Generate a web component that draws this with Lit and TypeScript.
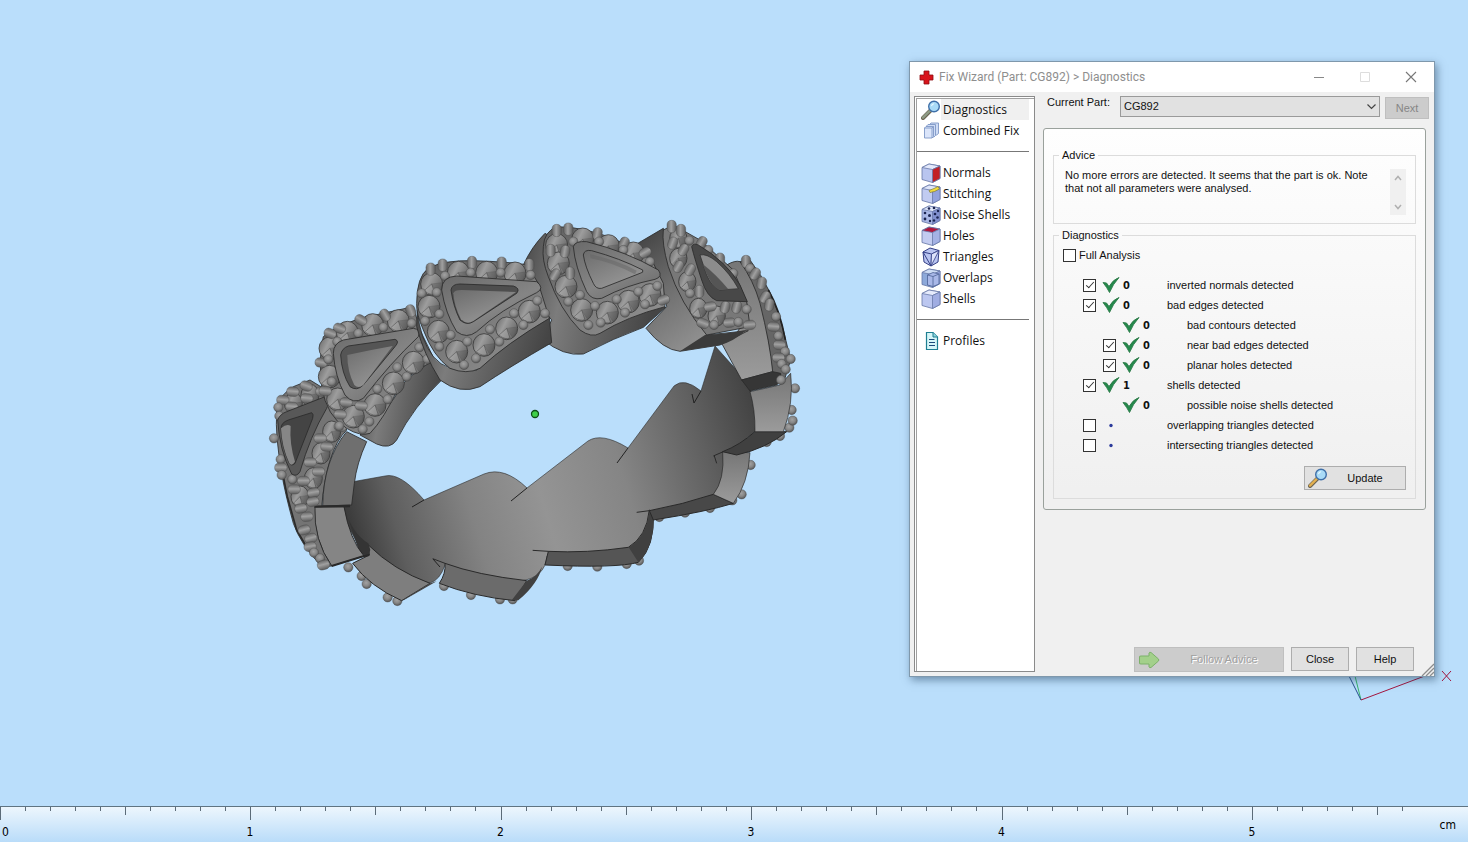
import { LitElement, html, svg, css, nothing } from "lit";
import { customElement } from "lit/decorators.js";

type Bead = [number, number, number?];

const cube = (top: string, left: string, right: string, extra: unknown = nothing) => svg`
  <path d="M1 4.500 L8 1 L19 3 V15.500 L11.500 19.500 L1 16.500 Z" fill=${left} stroke="#6676a4" stroke-width=".8"/>
  <path d="M1 4.500 L8 1 L19 3 L11.500 6.500 Z" fill=${top} stroke="#6a7aa8" stroke-width=".8"/>
  <path d="M11.500 6.500 L19 3 V15.500 L11.500 19.500 Z" fill=${right} stroke="#6a7aa8" stroke-width=".8"/>
  ${extra}`;

const lens = (handle: string) => svg`
  <path d="M2 18 L9.5 10.5" stroke="#6b6350" stroke-width="4" stroke-linecap="round"/>
  <path d="M2 17.6 L9 10.7" stroke=${handle} stroke-width="2.4" stroke-linecap="round"/>
  <circle cx="13" cy="6.5" r="5.3" fill="#a9dbf7" stroke="#3f6fa8" stroke-width="1.4"/>
  <path d="M9.8 6.5 Q10 3.4 13.4 3.2 Q12 6 9.8 6.5Z" fill="#e9f8ff"/>`;

const icons: Record<string, unknown> = {
  diagnostics: lens("#8f9c86"),
  combined: svg`
    <g stroke="#7f97c6" stroke-width=".9" fill="#cfdcf5">
      <path d="M8.500 3.500 L10 2 H17.500 V12.500 L15.500 14 H8.500Z"/>
      <path d="M5.500 5 L7 3.500 H14.500 V14.500 L13 16 H5.500Z"/>
      <path d="M3.500 7 L5 5.500 H12.500 V15.500 L11 17 H3.500Z" fill="#dbe5fa"/>
      <path d="M3.500 7 H11 V17 M11 7 L12.500 5.500" fill="none"/>
    </g>`,
  normals: cube("#e4e9fb", "#b9c5ef", "#c21f25"),
  stitching: cube("#dfe6fa", "#c1cbf1", "#93a2dd", svg`<path d="M8 6.500 L13 4.500 L17 2.500 L18.500 5 L13.500 7.500 L9 8.500Z" fill="#f2dc3c" stroke="#7d7a3a" stroke-width=".7"/>`),
  noise: cube("#dfe6fa", "#a9b7e6", "#8190cf", svg`
    <g fill="#1b2450"><circle cx="4" cy="8" r="1.300"/><circle cx="8" cy="3.500" r="1.300"/><circle cx="13" cy="3" r="1.300"/>
    <circle cx="8.500" cy="10.500" r="1.500"/><circle cx="4" cy="14" r="1.400"/><circle cx="9" cy="16" r="1.200"/>
    <circle cx="14" cy="9" r="1.300"/><circle cx="17" cy="6" r="1.200"/><circle cx="16.500" cy="12.500" r="1.300"/><circle cx="13" cy="15.500" r="1.200"/></g>`),
  holes: cube("#b0173c", "#c3ccf1", "#a5b2e5"),
  triangles: svg`
    <path d="M2 5 L9 1 L18 3.500 L17 15 L10 19 L3 15Z" fill="#b9c4f0" stroke="#343f86"/>
    <path d="M2 5 L10.500 7 L18 3.500 M10.500 7 L10 19 M2 5 L10 19" fill="none" stroke="#343f86"/>
    <path d="M10.500 7 L18 3.500 L10 19Z" fill="#dde3fa" stroke="#343f86" stroke-width=".8"/>`,
  overlaps: cube("#cddcf4", "#8da9da", "#9cabe3", svg`<path d="M6.500 7 L12 4.500 L18 6 V16 L12 18.500 L6.500 17Z" fill="#a9b8e8" stroke="#4c6296" stroke-width=".8"/><path d="M6.500 7 L12 8.500 L18 6 M12 8.500 V18.500" fill="none" stroke="#4c6296" stroke-width=".8"/>`),
  shells: cube("#e6ebfc", "#bcc7f0", "#a0ade2"),
  profiles: svg`
    <path d="M5.500 1.500 H12 L16.500 6 V18.500 H5.500Z" fill="#d6f6f8" stroke="#1e7f92" stroke-width="1.200"/>
    <path d="M12 1.500 V6 H16.500" fill="#8fd5de" stroke="#1e7f92"/>
    <path d="M8 8.500 H13.500 M8 11.500 H14 M8 14.500 H14" stroke="#1b4a7a" stroke-width="1.200"/>`,
};

const menu = [
  [["Diagnostics", "diagnostics"], ["Combined Fix", "combined"]],
  [["Normals", "normals"], ["Stitching", "stitching"], ["Noise Shells", "noise"], ["Holes", "holes"], ["Triangles", "triangles"], ["Overlaps", "overlaps"], ["Shells", "shells"]],
  [["Profiles", "profiles"]],
];

interface Check { label: string; count?: number; sub?: boolean; box?: boolean; on?: boolean }
const checks: Check[] = [
  { label: "inverted normals detected", count: 0, box: true, on: true },
  { label: "bad edges detected", count: 0, box: true, on: true },
  { label: "bad contours detected", count: 0, sub: true },
  { label: "near bad edges detected", count: 0, sub: true, box: true, on: true },
  { label: "planar holes detected", count: 0, sub: true, box: true, on: true },
  { label: "shells detected", count: 1, box: true, on: true },
  { label: "possible noise shells detected", count: 0, sub: true },
  { label: "overlapping triangles detected", box: true },
  { label: "intersecting triangles detected", box: true },
];

@customElement("ring-model")
class RingModel extends LitElement {
  static styles = css`
    :host { display: block; }
    svg { display: block; width: 100%; }
  `;

  beads(list: Bead[]) {
    return list.map(([x, y, a]) => a === undefined
      ? svg`<circle cx=${x} cy=${y} r="14" fill="url(#bead)" stroke="#484848" stroke-width="1.2"/>`
      : svg`<rect x="-14" y="-19" width="28" height="37" rx="13" fill="url(#peg)" stroke="#484848" stroke-width="1.2" transform="translate(${x} ${y}) rotate(${a})"/>`);
  }

  gems(list: [number, number][], rx = 33, ry = 34) {
    return list.map(([x, y]) => svg`
      <ellipse cx=${x} cy=${y} rx=${rx} ry=${ry} fill="url(#gem)" stroke="#303030" stroke-width="2.2"/>
      <path d="M${x} ${y} L${x - rx * 0.7} ${y + ry * 0.6} Q${x - rx * 0.1} ${y + ry * 1.05} ${x + rx * 0.3} ${y + ry * 0.85}Z" fill="#b0b0b0" opacity=".4"/>
      <path d="M${x} ${y} L${x + rx * 0.9} ${y - ry * 0.1} Q${x + rx * 0.9} ${y + ry * 0.5} ${x + rx * 0.5} ${y + ry * 0.75}Z" fill="#444" opacity=".25"/>`);
  }

  render() {
    return html`
      <svg viewBox="260 210 550 410" role="img" aria-label="Ring model">
        <defs>
          <radialGradient id="bead" cx=".45" cy=".38" r=".62"><stop offset="0" stop-color="#a2a2a2"/><stop offset=".55" stop-color="#878787"/><stop offset="1" stop-color="#555"/></radialGradient>
          <linearGradient id="peg"><stop offset="0" stop-color="#666"/><stop offset=".45" stop-color="#a0a0a0"/><stop offset="1" stop-color="#5c5c5c"/></linearGradient>
          <linearGradient id="gem" x2="1" y2=".5"><stop offset="0" stop-color="#646464"/><stop offset=".45" stop-color="#9d9d9d"/><stop offset="1" stop-color="#6a6a6a"/></linearGradient>
          <linearGradient id="inner" gradientUnits="userSpaceOnUse" x1="350" y1="520" x2="755" y2="400">
            <stop offset="0" stop-color="#3c3c3c"/><stop offset=".1" stop-color="#5e5e5e"/><stop offset=".28" stop-color="#838383"/><stop offset=".45" stop-color="#949494"/><stop offset=".65" stop-color="#858585"/><stop offset=".85" stop-color="#606060"/><stop offset="1" stop-color="#424242"/>
          </linearGradient>
          <linearGradient id="face" x2="1" y2="1"><stop offset="0" stop-color="#606060"/><stop offset="1" stop-color="#949494"/></linearGradient>
          <linearGradient id="wall" x2="1" y2=".2"><stop offset="0" stop-color="#474747"/><stop offset=".35" stop-color="#7c7c7c"/><stop offset=".6" stop-color="#666"/><stop offset="1" stop-color="#454545"/></linearGradient>
          <linearGradient id="wallRight" x2=".7" y2="1"><stop offset="0" stop-color="#3e3e3e"/><stop offset=".45" stop-color="#6d6d6d"/><stop offset="1" stop-color="#999"/></linearGradient>
          <linearGradient id="frame" x2=".8" y2="1"><stop offset="0" stop-color="#6a6a6a"/><stop offset=".6" stop-color="#858585"/><stop offset="1" stop-color="#6c6c6c"/></linearGradient>
          <linearGradient id="pit" x2=".7" y2="1"><stop offset="0" stop-color="#6c6c6c"/><stop offset="1" stop-color="#989898"/></linearGradient>
          <linearGradient id="block" x2="0" y2="1"><stop offset="0" stop-color="#767676"/><stop offset="1" stop-color="#9b9b9b"/></linearGradient>
        </defs>

        <g transform="translate(260 400) scale(.33333)">
          ${this.beads([[265, 502], [305, 528], [320, 552], [383, 592], [412, 603], [552, 558], [633, 585], [720, 598], [758, 598]])}
        </g>
        <g transform="translate(520 380) scale(.33333)">
          ${this.beads([[143, 558], [232, 560], [320, 552], [357, 542], [418, 411], [495, 398], [570, 384], [637, 361], [665, 343], [692, 255], [740, 186], [780, 168], [808, 143], [818, 122], [815, 90], [825, 25]])}
        </g>

        <path d="M340 484 L385 476 Q400 472 424 500 L484 474 Q504 466 527 488 L588 441 Q602 432 628 448 L674 386 Q684 377 701 391 L715 346 L750 385 L757 430 L725 456 L724 475 Q722 488 713 497 L650 513 Q648 534 630 552 L547 556 Q545 578 520 581 Q470 575 445 565 Q440 580 430 583 Q380 572 364 556 L345 520Z" fill="url(#inner)" stroke="#2a2a2a" stroke-width=".6"/>
        <path d="M412 507 L424 500 M511 501 L527 488 M617 463 L628 448 M694 403 L701 391 M694 403 L692 394 M433 559 L440 567" stroke="#222" stroke-width="1" fill="none"/>

        <g transform="translate(260 400) scale(.33333)" stroke="#292929" stroke-width="3">
          <path d="M325 435 Q400 510 510 550 L425 602 Q330 560 278 490 L328 465Z" fill="#7e7e7e"/>
          <path d="M510 550 L530 544 L432 600 L425 602Z" fill="#444" stroke="none"/>
          <path d="M555 490 Q650 525 800 542 L765 602 Q640 590 538 550 Q558 520 555 490Z" fill="#6b6b6b"/>
          <path d="M518 476 L555 490" fill="none"/>
          <path d="M800 542 Q832 530 846 500 Q835 550 775 601 L755 601Z" fill="#414141" stroke="none"/>
          <path d="M252 320 Q275 400 325 430 L331 450 L325 465 L300 462 Z" fill="#343434" stroke="none"/>
          <path d="M163 320 L252 320 Q270 420 312 468 L215 498 Q160 420 163 320Z" fill="#858585"/>
          <path d="M215 498 L312 468 L328 465" fill="none" stroke-width="6"/>
        </g>
        <g transform="translate(520 380) scale(.33333)" stroke="#292929" stroke-width="3">
          <path d="M85 514 Q200 520 325 502 Q380 470 388 390 L400 398 Q405 500 355 547 Q290 565 75 555Z" fill="#555"/>
          <path d="M38 511 L85 514" fill="none"/>
          <path d="M326 502 Q380 470 388 392 L400 398 Q405 500 355 547Z" fill="#404040" stroke="none"/>
          <path d="M388 392 Q490 373 580 343 L640 370 Q560 395 400 420Z" fill="#484848"/>
          <path d="M350 397 L388 392" fill="none"/>
          <path d="M580 343 Q615 300 608 215 L690 218 Q685 310 640 370Z" fill="url(#block)" stroke-width="2"/>
          <path d="M608 215 Q660 195 705 155 L800 155 Q740 205 650 225Z" fill="#404040"/>
          <path d="M580 228 L610 215 M583 228 L590 250" fill="none"/>
          <path d="M690 35 L780 15 L812 -20 Q822 70 790 155 L705 155 Q706 90 690 35Z" fill="url(#block)" stroke-width="2"/>
        </g>

        <g transform="translate(520 210) scale(.33333)" stroke="#2a2a2a" stroke-width="2.5">
          <path d="M660 155 L690 150 Q760 240 790 360 L812 450 L790 520 L758 490 Q740 300 660 155Z" fill="#666"/>
          <path d="M745 240 Q780 300 796 390" stroke="#222" stroke-width="5" fill="none"/>
          <path d="M620 165 Q645 150 660 155 Q700 210 720 280 Q750 400 758 485 L665 510 L605 400 L650 370 L690 300Z" fill="url(#block)"/>
          <path d="M665 510 L758 485 L782 490 Q785 515 770 525 L690 543Z" fill="#363636"/>
          ${this.beads([[678, 155, 0], [690, 175], [705, 192, 30], [725, 220, 10], [735, 262, 30], [748, 285, 10], [768, 320], [760, 350, 95], [775, 378], [778, 405, 95], [795, 425], [775, 443, 92], [785, 462], [812, 447], [797, 478], [783, 510]])}

          <path d="M430 55 L345 105 Q400 140 425 220 L440 290 L378 355 Q430 420 480 424 L600 405 L685 362 L560 375Z" fill="url(#wallRight)"/>
          <path d="M555 375 Q620 372 680 360 Q640 395 600 405 L480 424Z" fill="#3b3b3b" stroke="none"/>
          <path d="M430 60 L460 45 L540 90 L640 180 L680 275 L690 350 L560 375 Q480 280 445 170 Q425 100 430 60Z" fill="#787878"/>
          ${this.gems([[475, 85], [475, 145], [502, 215], [535, 295], [590, 318]], 26, 30)}
          ${this.beads([[565, 120], [455, 50, 0], [483, 62, 0], [458, 100, 20], [508, 92], [545, 98, 30], [490, 120, 30], [475, 170, 30], [510, 180, 30], [600, 148, 0], [640, 190], [510, 250], [538, 245, 0], [570, 290, 80], [615, 292, 15], [650, 292, 15], [680, 298], [548, 340, 110], [582, 345], [628, 338, 85], [655, 336], [688, 345, 85]])}
          <path d="M515 110 Q520 98 535 105 Q620 155 660 225 L682 275 L590 272 Q560 260 545 210 Q525 150 515 110Z" fill="#484848"/>
          <path d="M540 135 Q560 130 590 155 Q630 190 655 236 L600 240 Q575 230 560 195Z" fill="#8c8c8c" stroke-width="2"/>
          <path d="M548 162 Q590 195 625 238 L598 240 Q572 230 548 162Z" fill="#555" stroke="none"/>

          <path d="M75 70 Q35 110 10 165 L60 230 Q55 290 95 330 L68 388 Q130 440 190 432 Q280 385 370 352 L437 292Z" fill="url(#wall)"/>
          <path d="M70 110 Q72 65 110 50 Q200 50 300 95 L395 150 L430 220 L435 290 Q320 320 240 370 Q215 385 180 360 Q120 300 85 200 Q65 150 70 110Z" fill="url(#face)"/>
          ${this.gems([[110, 105], [115, 160], [138, 230], [185, 300], [262, 308], [325, 275], [390, 255], [188, 88], [265, 108], [340, 130]])}
          ${this.beads([[110, 62, 0], [145, 58, 0], [232, 72, 10], [312, 100, 25], [375, 128, 60], [92, 122, 0], [135, 125, 10], [160, 95], [237, 95], [310, 120], [390, 155], [105, 195, 30], [150, 190, 0], [145, 275], [180, 255], [205, 345], [242, 338], [225, 288], [290, 268], [315, 308], [355, 245], [375, 283], [412, 228], [430, 270, 70]])}
          <path d="M160 110 Q165 92 200 95 Q320 125 415 180 Q430 200 405 208 Q320 225 245 265 Q215 272 200 245 Q165 170 160 110Z" fill="url(#frame)"/>
          <path d="M190 135 Q192 118 215 122 Q300 145 368 180 Q372 188 360 190 L245 235 Q228 238 220 220 Q195 170 190 135Z" fill="url(#pit)"/>
          <path d="M210 133 Q290 150 350 182 L345 193 Q280 158 212 145Z" fill="#666" stroke="none" opacity=".5"/>
        </g>

        <g transform="translate(260 400) scale(.33333)" stroke="#2a2a2a" stroke-width="2.5">
          <path d="M50 20 Q60 -15 100 -40 L150 -60 L215 -20 L260 90 Q200 150 185 320 L165 320 Q160 420 215 498 L185 500 Q120 430 100 370 Q75 280 65 220 Q45 100 50 40Z" fill="#747474"/>
          <path d="M68 220 L82 290 L110 390 L145 450" fill="none" stroke="#2a2a2a" stroke-width="5"/>
          <path d="M260 95 L320 125 Q290 190 283 250 L275 315 L188 318 Q190 180 260 95Z" fill="#6f6f6f"/>
          <path d="M163 320 L270 318" stroke-width="7" fill="none"/>
          ${this.gems([[215, 95], [183, 160], [160, 235], [120, 290], [100, 10], [150, -15]], 27, 32)}
          ${this.beads([[98, -25, 95], [138, -42, 110], [185, -25, 95], [140, -5, 95], [68, 0, 95], [95, 20, 95], [55, 22], [58, 48], [42, 115], [62, 178], [62, 203, 90], [65, 225], [180, 115, 90], [200, 140, 95], [150, 187, 90], [175, 215, 90], [130, 243, 90], [97, 238], [102, 268, 90], [160, 278, 80], [158, 305, 80], [122, 325, 80], [140, 350, 85], [132, 390, 75], [152, 415, 75], [150, 440, 80], [162, 458], [180, 475], [190, 495, 75], [240, 80, 100]])}
          <path d="M53 60 Q60 42 80 35 L190 -8 Q215 -2 200 25 Q150 110 120 215 Q110 232 95 222 Q58 150 53 60Z" fill="#585858"/>
          <path d="M63 85 Q63 68 85 60 L155 38 Q162 42 158 55 L105 190 Q95 200 88 190 Q65 140 63 85Z" fill="#444"/>
          <path d="M63 85 Q80 70 92 78 Q88 130 105 185 Q95 200 88 190 Q65 140 63 85Z" fill="#868686" stroke="none"/>
        </g>

        <g transform="translate(260 240) scale(.33333)" stroke="#2a2a2a" stroke-width="2.5">
          <path d="M300 585 Q380 520 430 430 Q480 380 525 360 L550 415 Q460 500 410 600 Q390 630 350 612Z" fill="url(#wall)"/>
          <path d="M190 290 Q215 265 300 235 L460 200 L480 270 L525 362 Q460 390 420 435 Q370 540 330 580 Q300 590 260 565 Q200 530 185 440 Q175 350 190 290Z" fill="url(#face)"/>
          ${this.gems([[210, 325], [208, 410], [233, 478], [280, 530], [345, 495], [400, 430], [460, 368], [262, 278], [338, 255], [415, 243]])}
          ${this.beads([[452, 212, 160], [455, 250], [375, 225, 150], [370, 262], [302, 240, 120], [295, 280], [238, 265, 110], [210, 280, 110], [232, 305], [183, 368, 100], [205, 358], [195, 453, 95], [215, 425], [258, 487, 95], [303, 497, 95], [240, 523, 95], [328, 545], [308, 568], [238, 558], [352, 447], [383, 478], [412, 382], [440, 410], [478, 322], [502, 357]])}
          <path d="M220 340 Q220 310 250 300 L460 265 Q485 268 475 290 Q390 370 310 475 Q280 495 255 465 Q225 410 220 340Z" fill="url(#frame)"/>
          <path d="M242 345 Q245 325 265 318 L405 298 Q420 303 405 320 L310 435 Q290 455 270 440 Q245 400 242 345Z" fill="#555"/>
          <path d="M262 345 Q330 330 398 318 L310 435 Q295 447 283 435 Q262 395 262 345Z" fill="url(#pit)" stroke="none"/>

          <path d="M472 210 Q480 300 520 350 Q560 400 650 390 Q740 310 868 232 L875 308 Q750 380 660 440 Q600 465 540 420 Q490 340 470 260Z" fill="url(#wall)"/>
          <path d="M470 190 Q470 110 505 85 Q550 60 640 62 Q740 65 800 74 L835 130 L868 235 Q740 310 660 385 Q620 405 570 385 Q520 350 490 270 Q468 220 470 190Z" fill="url(#face)"/>
          ${this.gems([[515, 132], [595, 98], [680, 98], [765, 100], [507, 200], [535, 275], [590, 335], [672, 315], [740, 265], [808, 215]])}
          ${this.beads([[512, 88, 0], [548, 76, 0], [636, 68, 0], [725, 70, 0], [808, 75, 0], [555, 108], [632, 98], [722, 98], [812, 105], [485, 160], [530, 157], [495, 243], [538, 222], [572, 285], [538, 320], [622, 305], [612, 375], [648, 355], [690, 268], [718, 305], [762, 220], [790, 255], [832, 182], [855, 220]])}
          <path d="M545 150 Q545 110 590 108 L830 125 Q855 145 830 158 Q720 210 650 275 Q620 298 590 275 Q556 220 545 150Z" fill="url(#frame)"/>
          <path d="M573 150 Q576 132 600 132 L760 138 Q782 145 770 160 L640 245 Q620 258 600 240 Q580 200 573 150Z" fill="#4e4e4e"/>
          <path d="M580 160 Q582 150 605 150 L768 156 L640 243 Q620 255 603 238 Q583 200 580 160Z" fill="url(#pit)" stroke="none"/>
        </g>
        <circle cx="535" cy="414" r="3.500" fill="#3fd04a" stroke="#0d4d16" stroke-width="1.300"/>
      </svg>`;
  }
}

@customElement("cm-ruler")
class CmRuler extends LitElement {
  static styles = css`
    :host {
      display: block;
      background: linear-gradient(#edf6fd, #b9dcf9);
      border-top: 1px solid #5f7482;
      font: 12px "DejaVu Sans Condensed", "DejaVu Sans", sans-serif;
    }
    svg { display: block; width: 100%; height: 35px; }
  `;
  render() {
    const pitch = 25.05;
    return html`
      <svg shape-rendering="crispEdges">
        ${Array.from({ length: 57 }, (_, i) => {
          const x = Math.floor(i * pitch) + 0.5;
          const len = i % 10 === 0 ? 13 : i % 5 === 0 ? 8 : 4;
          return svg`<path d="M${x} 0 V${len}" stroke="#5b6b78"/>`;
        })}
        ${Array.from({ length: 6 }, (_, n) => svg`
          <text x=${n === 0 ? 2 : n * pitch * 10 - 4} y="29">${n}</text>`)}
        <text x="100%" y="22" dx="-12" text-anchor="end">cm</text>
      </svg>`;
  }
}

@customElement("fix-wizard")
class FixWizard extends LitElement {
  static styles = css`
    :host {
      display: flex;
      flex-direction: column;
      box-sizing: border-box;
      background: #f0f0f0;
      border: 1px solid #7f98ac;
      box-shadow: 2px 3px 8px rgba(30, 60, 90, 0.5);
      font: 11px/13px "Liberation Sans", Arial, sans-serif;
      color: #111;
    }
    button, select { font: inherit; color: inherit; margin: 0; padding: 0; box-sizing: border-box; }
    svg { display: block; flex: none; }
    .title {
      display: flex;
      align-items: center;
      height: 30px;
      padding: 0 16px 0 9px;
      gap: 5px;
      background: #fff;
      color: #8e8e8e;
      font: 12px/16px Roboto, sans-serif;
    }
    .caption { flex: 1; white-space: nowrap; }
    .controls { display: flex; gap: 32px; }
    .controls button { width: 14px; height: 14px; border: 0; background: none; }
    .body { flex: 1; display: flex; padding: 4px 8px 4px 4px; gap: 8px; }
    nav {
      flex: none;
      width: 121px;
      box-sizing: border-box;
      background: #fff;
      border: 1px solid #8a8a8a;
      box-shadow: inset 1px 1px #fff, inset 2px 2px #a0a0a0;
      padding: 2px 5px 0 2px;
      font: 12px/21px "Open Sans", sans-serif;
    }
    .item { display: flex; align-items: center; height: 21px; padding-left: 4px; color: #111; text-decoration: none; }
    .item span { flex: 1; padding-left: 2px; white-space: nowrap; }
    .current span { background: #f0f0f0; }
    .rule { height: 1px; margin: 10px 0; border: 0; background: #777; }
    .main { flex: 1; display: flex; flex-direction: column; min-width: 0; }
    .part { display: flex; gap: 5px; }
    .part label { width: 68px; padding-left: 4px; }
    .picker { flex: 1; position: relative; }
    select {
      appearance: none;
      width: 100%;
      height: 21px;
      padding: 0 3px;
      border: 1px solid #9a9a9a;
      border-radius: 0;
      background: #e1e1e1;
    }
    .picker svg { position: absolute; right: 4px; top: 7px; pointer-events: none; }
    .next { width: 44px; height: 22px; margin: 1px -3px 0 0; border: 1px solid #bfbfbf; background: #ccc; color: #868686; }
    .tab {
      display: flex;
      flex-direction: column;
      gap: 5px;
      margin-top: 9px;
      padding: 20px 9px 10px;
      border: 1px solid #9aa19c;
      border-radius: 3px;
      background: linear-gradient(#fefefe, #f0f0f0 95%);
    }
    fieldset { margin: 0; padding: 0 9px; border: 1px solid #dcdcdc; min-width: 0; }
    legend { margin-left: -4px; padding: 0 3px; }
    .advice { display: flex; justify-content: space-between; height: 46px; padding: 7px 0 8px 2px; }
    .advice p { margin: 0; width: 310px; }
    .scroll { display: flex; flex-direction: column; justify-content: space-between; width: 16px; background: #f0f0f0; }
    .scroll button { display: grid; place-items: center; width: 16px; height: 17px; border: 0; background: none; }
    input {
      appearance: none;
      display: grid;
      place-items: center;
      width: 13px;
      height: 13px;
      margin: 0;
      border: 1px solid #333;
      background: #fff;
      box-sizing: border-box;
    }
    input:checked::after {
      content: "";
      width: 7px;
      height: 3px;
      border: solid #333;
      border-width: 0 0 1px 1px;
      transform: translateY(-1px) rotate(-48deg);
    }
    .full { display: flex; align-items: center; gap: 3px; height: 20px; margin-top: 3px; }
    .list { margin: 10px 0 11px; padding: 0; list-style: none; }
    .row { display: grid; grid-template-columns: 13px 18px 38px auto; column-gap: 6px; align-items: center; height: 20px; padding-left: 20px; }
    .row b { margin-left: -3px; font-family: "DejaVu Sans Condensed", "DejaVu Sans", sans-serif; }
    .row > :last-child { margin-left: -3px; }
    .sub { padding-left: 40px; }
    .push { border: 1px solid #adadad; background: #e1e1e1; height: 24px; }
    .update { display: flex; align-items: center; width: 102px; padding: 0 3px; margin: 0 0 8px auto; }
    .update span { flex: 1; }
    .foot { display: flex; justify-content: flex-end; gap: 7px; margin-top: auto; padding-right: 12px; }
    .follow { display: flex; align-items: center; width: 150px; height: 25px; padding: 0 3px; background: #ccc; border-color: #bfbfbf; color: #a0a0a0; text-shadow: 1px 1px #fff; }
    .follow span { flex: 1; padding-left: 8px; }
    .close { width: 58px; }
    .grip { position: absolute; right: 0; bottom: 0; }
  `;

  render() {
    return html`
      <header class="title">
        <svg width="15" height="15" viewBox="0 0 15 15"><path d="M5 1 H10 V5 H14 V10 H10 V14 H5 V10 H1 V5 H5Z" fill="#d8131b" stroke="#8d0d12" stroke-width=".8" stroke-linejoin="round"/></svg>
        <span class="caption">Fix Wizard (Part: CG892) &gt; Diagnostics</span>
        <div class="controls">
          <button aria-label="Minimize"><svg width="14" height="14"><path d="M2 7.500 H12" stroke="#888"/></svg></button>
          <button aria-label="Maximize" disabled><svg width="14" height="14"><path d="M2.500 2.500 H11.500 V11.500 H2.500Z" fill="none" stroke="#ddd"/></svg></button>
          <button aria-label="Close window"><svg width="14" height="14"><path d="M2 2 L12 12 M12 2 L2 12" stroke="#777" stroke-width="1.100"/></svg></button>
        </div>
      </header>
      <div class="body">
        <nav>
          ${menu.map((group, g) => html`
            ${g ? html`<hr class="rule">` : nothing}
            ${group.map(([name, icon]) => html`
              <a class="item ${icon === "diagnostics" ? "current" : ""}" href="#${icon}">
                <svg width="20" height="20" viewBox="0 0 20 20" fill="none">${icons[icon]}</svg><span>${name}</span>
              </a>`)}`)}
        </nav>
        <div class="main">
          <div class="part">
            <label for="part">Current Part:</label>
            <div class="picker">
              <select id="part"><option>CG892</option></select>
              <svg width="9" height="7"><path d="M.5 1.500 L4.500 5.500 L8.500 1.500" fill="none" stroke="#444" stroke-width="1.200"/></svg>
            </div>
            <button class="next" disabled>Next</button>
          </div>
          <section class="tab">
            <fieldset>
              <legend>Advice</legend>
              <div class="advice">
                <p>No more errors are detected. It seems that the part is ok. Note that not all parameters were analysed.</p>
                <div class="scroll">
                  <button aria-label="Scroll up" disabled><svg width="8" height="6"><path d="M1 5 L4 1.500 L7 5" fill="none" stroke="#b0b0b0" stroke-width="1.500"/></svg></button>
                  <button aria-label="Scroll down" disabled><svg width="8" height="6"><path d="M1 1 L4 4.500 L7 1" fill="none" stroke="#b0b0b0" stroke-width="1.500"/></svg></button>
                </div>
              </div>
            </fieldset>
            <fieldset>
              <legend>Diagnostics</legend>
              <div class="full"><input type="checkbox" id="full"><label for="full">Full Analysis</label></div>
              <ul class="list">
                ${checks.map((c, i) => html`
                  <li class="row ${c.sub ? "sub" : ""}">
                    ${c.box ? html`<input type="checkbox" id="check-${i}" .checked=${!!c.on}>` : html`<span></span>`}
                    <svg width="18" height="18" viewBox="0 0 18 18">
                      ${c.count === undefined
                        ? svg`<circle cx="9" cy="9.500" r="1.700" fill="#2b3a9b"/>`
                        : svg`<path d="M1 6.500 L4.500 7 L7 10.500 Q11 3.500 17 1.500 Q11 8 7.500 16.500 Q5 11.500 1 6.500Z" fill="#23894b" stroke="#2c7a48" stroke-width=".9"/>`}
                    </svg>
                    <b>${c.count ?? ""}</b>
                    ${c.box ? html`<label for="check-${i}">${c.label}</label>` : html`<span>${c.label}</span>`}
                  </li>`)}
              </ul>
              <button class="push update">
                <svg width="20" height="20" viewBox="0 0 20 20" fill="none">${lens("#e3b04f")}</svg><span>Update</span>
              </button>
            </fieldset>
          </section>
          <footer class="foot">
            <button class="push follow" disabled>
              <svg width="22" height="18" viewBox="0 0 22 18"><path d="M1.500 6 Q1 5 3 5 H11 V2 Q11.500 .8 13 1.500 L20.500 8 Q21 9 20.500 10 L13 16.500 Q11.500 17 11 16 V13 H3 Q1 13 1.500 12Z" fill="#a3d08b" stroke="#7db26a"/></svg>
              <span>Follow Advice</span>
            </button>
            <button class="push close">Close</button>
            <button class="push close">Help</button>
          </footer>
        </div>
      </div>
      <svg class="grip" width="13" height="13"><path d="M1 13 L13 1 M5 13 L13 5 M9 13 L13 9" stroke="#8d8d8d" stroke-width="1.300"/></svg>`;
  }
}

@customElement("app-root")
class AppRoot extends LitElement {
  static styles = css`
    :host { display: flex; flex-direction: column; height: 100vh; background: #badefb; overflow: hidden; }
    .view { flex: 1; position: relative; min-height: 0; }
    .ring { position: absolute; left: 260px; top: 210px; width: 550px; }
    .axes { position: absolute; right: 14px; top: 660px; }
    .wizard { position: absolute; right: 33px; top: 61px; width: 526px; min-height: 616px; }
  `;
  render() {
    return html`
      <main class="view">
        <ring-model class="ring"></ring-model>
        <svg class="axes" width="110" height="44" fill="none">
          <path d="M11 16 L17 40" stroke="#35b56a"/>
          <path d="M5 16 L17 40" stroke="#27518f"/>
          <path d="M17 40 L86 14" stroke="#a3163f"/>
          <path d="M98 11 L107 21 M107 11 L98 21" stroke="#a3163f"/>
        </svg>
        <fix-wizard class="wizard"></fix-wizard>
      </main>
      <cm-ruler></cm-ruler>`;
  }
}
